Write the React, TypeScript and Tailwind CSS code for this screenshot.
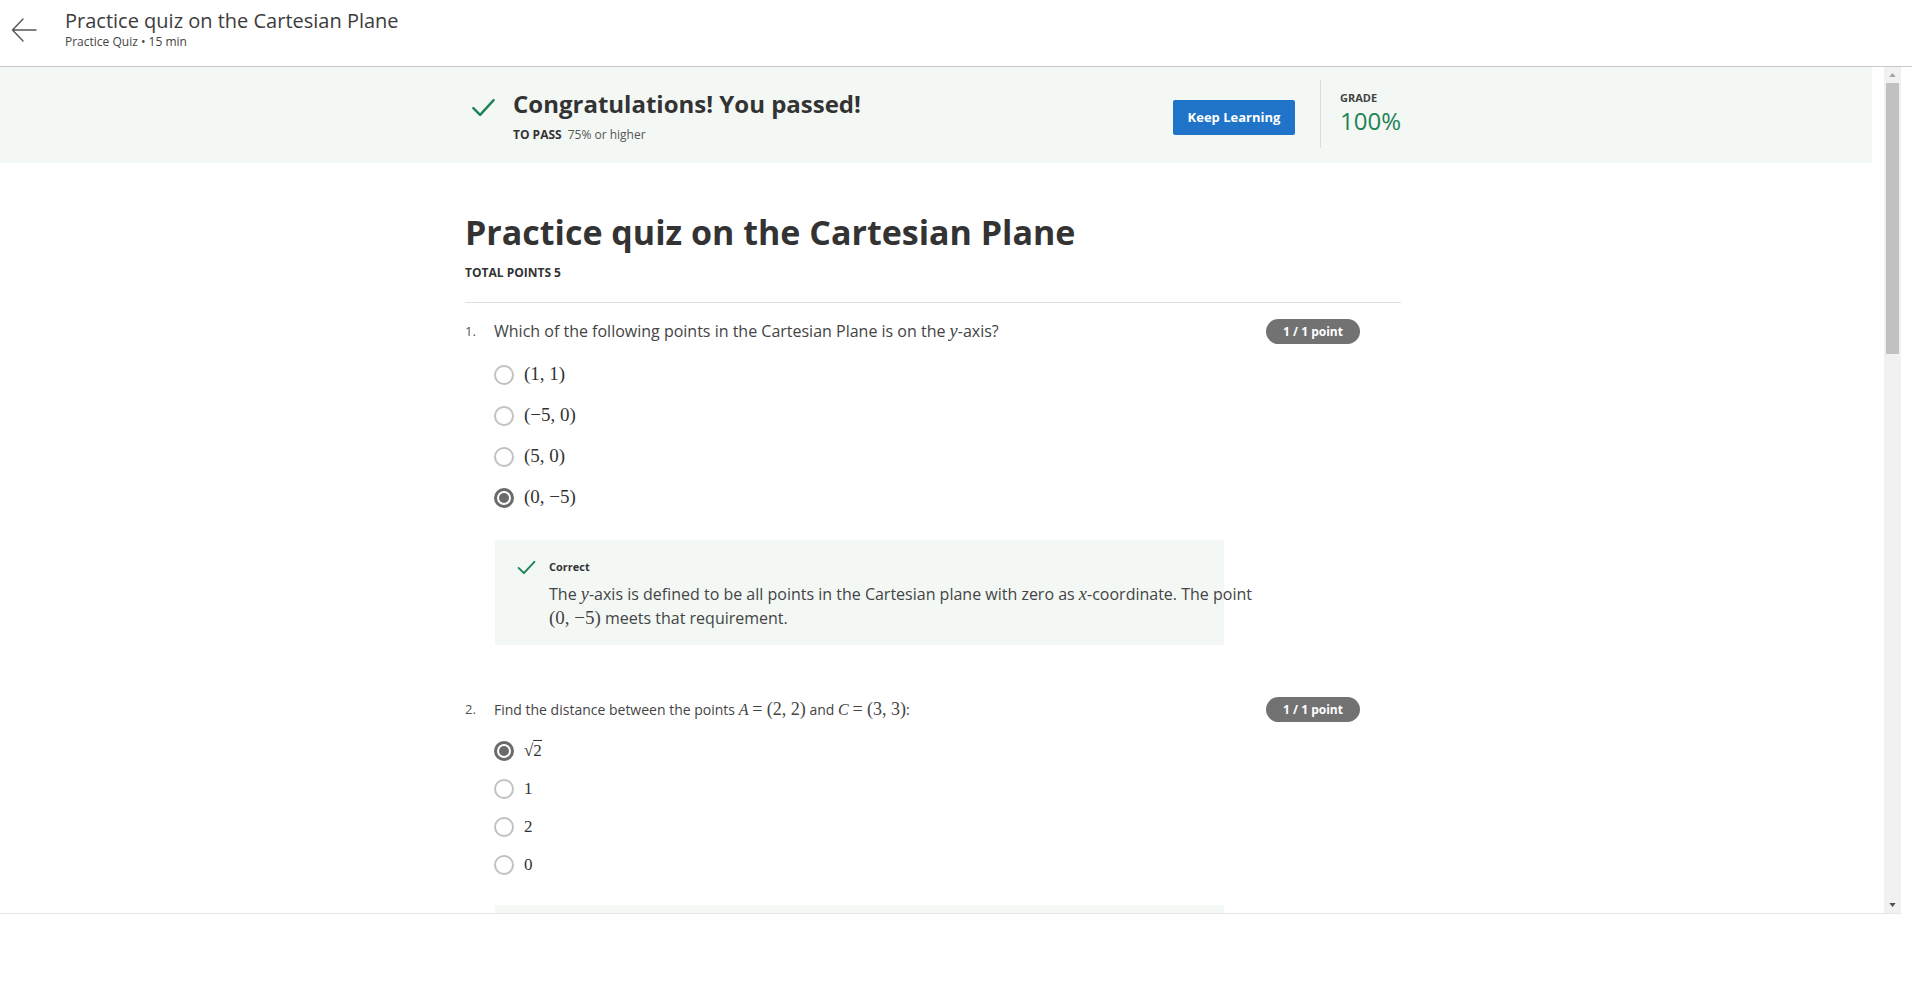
import React from "react";

function Radio({ checked }: { checked?: boolean }) {
  if (checked) {
    return (
      <span className="flex h-[20px] w-[20px] shrink-0 items-center justify-center rounded-full border-[3px] border-[#6a6a6a]">
        <span className="h-[10px] w-[10px] rounded-full bg-[#6a6a6a]" />
      </span>
    );
  }
  return <span className="h-[20px] w-[20px] shrink-0 rounded-full border-2 border-[#c2c2c2]" />;
}

function M({ children, className = "" }: { children: React.ReactNode; className?: string }) {
  return <span className={"font-['Liberation_Serif',serif] " + className}>{children}</span>;
}

function I({ children }: { children: React.ReactNode }) {
  return <span className="font-['Liberation_Serif',serif] text-[1.15em] italic">{children}</span>;
}

function Check({ className = "" }: { className?: string }) {
  return (
    <svg viewBox="0 0 24 24" className={className} fill="none" stroke="#1f8354" strokeWidth="2.2" strokeLinecap="round" strokeLinejoin="round">
      <path d="M3 12.5 L9 18.5 L21 5.5" />
    </svg>
  );
}

function Badge() {
  return (
    <div className="mr-[41px] flex h-[25px] w-[94px] items-center justify-center rounded-full bg-[#727272] text-[12px] font-bold text-white">
      1 / 1 point
    </div>
  );
}

export default function App() {
  return (
    <div className="flex h-[984px] w-[1912px] flex-col overflow-hidden bg-white font-['Open_Sans',sans-serif] text-[#333]">
      {/* Header */}
      <div className="flex h-[67px] shrink-0 items-start border-b border-[#c8c8c8]">
        <div className="ml-[11px] mt-[17px] h-[26px] w-[26px]">
          <svg viewBox="0 0 26 26" className="h-[26px] w-[26px]" fill="none" stroke="#555" strokeWidth="1.4" strokeLinecap="round" strokeLinejoin="round">
            <path d="M25 13 H2 M12 2 L1.5 13 L12 24" />
          </svg>
        </div>
        <div className="ml-[28px] mt-[7px] flex flex-col">
          <div className="text-[20px] leading-[28px] text-[#3c3c3c]">Practice quiz on the Cartesian Plane</div>
          <div className="mt-[-1px] text-[12px] leading-[16px] text-[#444]">Practice Quiz • 15 min</div>
        </div>
      </div>

      {/* Body */}
      <div className="flex h-[847px] w-[1901px] shrink-0 border-b border-[#e6e6e6]">
        <div className="flex-1 overflow-hidden">
          {/* Banner */}
          <div className="mr-[12px] flex h-[96px] bg-[#f3f8f5]">
            <div className="ml-[465px] flex w-[936px] items-start">
              <div className="flex flex-1 items-start pt-[23px]">
                <Check className="ml-[5px] mt-[4px] h-[27px] w-[27px]" />
                <div className="ml-[16px] flex flex-col">
                  <div className="text-[24px] font-bold leading-[28px] text-[#333]">Congratulations! You passed!</div>
                  <div className="mt-[10px] flex items-center text-[12px] leading-[14px]">
                    <span className="font-bold text-[#333]">TO PASS</span>
                    <span className="ml-[6px] text-[#555]">75% or higher</span>
                  </div>
                </div>
              </div>
              <div className="mt-[33px] flex h-[35px] w-[122px] items-center justify-center rounded-[2px] bg-[#1f73c9] text-[13px] font-bold text-white">
                Keep Learning
              </div>
              <div className="ml-[25px] mt-[13px] h-[68px] w-px bg-[#dcdcdc]" />
              <div className="ml-[19px] mt-[24px] flex w-[61px] flex-col">
                <div className="text-[11px] font-bold leading-[14px] text-[#444]">GRADE</div>
                <div className="mt-[1px] text-[24px] leading-[30px] text-[#1f8354]">100%</div>
              </div>
            </div>
          </div>

          {/* Content */}
          <div className="ml-[465px] flex w-[936px] flex-col">
            <h1 className="mt-[47px] text-[34px] font-bold leading-[44px] text-[#333]">Practice quiz on the Cartesian Plane</h1>
            <div className="mt-[11px] text-[12px] font-bold leading-[16px] text-[#333]">TOTAL POINTS 5</div>
            <div className="mt-[21px] h-px bg-[#dedede]" />

            {/* Q1 */}
            <div className="mt-[16px] flex items-start justify-between">
              <div className="flex text-[16px] leading-[24px] text-[#444]">
                <span className="w-[29px] text-[13px] text-[#555]">1.</span>
                <span>
                  Which of the following points in the Cartesian Plane is on the <I>y</I>-axis?
                </span>
              </div>
              <div className="mt-[0px]">
                <Badge />
              </div>
            </div>
            <div className="mt-[10px] flex flex-col pl-[29px]">
              {[
                ["(1, 1)", false],
                ["(−5, 0)", false],
                ["(5, 0)", false],
                ["(0, −5)", true],
              ].map(([t, c], i) => (
                <div key={i} className="flex h-[41px] items-center">
                  <Radio checked={c as boolean} />
                  <M className="ml-[10px] text-[19px] text-[#333]">{t as string}</M>
                </div>
              ))}
            </div>
            <div className="ml-[30px] mt-[22px] flex h-[105px] w-[729px] flex-col bg-[#f3f8f5] pl-[54px] pt-[19px]">
              <div className="relative flex items-center">
                <Check className="absolute left-[-33px] top-[-2px] h-[21px] w-[21px]" />
                <span className="text-[11px] font-bold leading-[16px] text-[#333]">Correct</span>
              </div>
              <div className="mt-[7px] w-[760px] text-[16px] leading-[24px] text-[#444]">
                The <I>y</I>-axis is defined to be all points in the Cartesian plane with zero as <I>x</I>-coordinate. The point
                <br />
                <M className="text-[19px]">(0, −5)</M> meets that requirement.
              </div>
            </div>

            {/* Q2 */}
            <div className="mt-[52px] flex items-start justify-between">
              <div className="flex text-[14px] leading-[24px] text-[#444]">
                <span className="w-[29px] text-[13px] text-[#555]">2.</span>
                <span>
                  Find the distance between the points <I>A</I> <M className="text-[18px]">= (2, 2)</M> and <I>C</I>{" "}
                  <M className="text-[18px]">= (3, 3)</M>:
                </span>
              </div>
              <div className="mt-[0px]">
                <Badge />
              </div>
            </div>
            <div className="mt-[10px] flex flex-col pl-[29px]">
              {[
                ["√2", true],
                ["1", false],
                ["2", false],
                ["0", false],
              ].map(([t, c], i) => (
                <div key={i} className="flex h-[38px] items-center">
                  <Radio checked={c as boolean} />
                  <M className="ml-[10px] text-[17px] text-[#333]">
                    {t === "√2" ? (
                      <span>
                        √<span className="border-t border-[#333]">2</span>
                      </span>
                    ) : (
                      (t as string)
                    )}
                  </M>
                </div>
              ))}
            </div>
            <div className="ml-[30px] mt-[21px] h-[105px] w-[729px] bg-[#f3f8f5]" />
          </div>
        </div>

        {/* Scrollbar */}
        <div className="flex w-[17px] flex-col items-center bg-[#f1f1f1]">
          <div className="flex h-[16px] w-full items-center justify-center">
            <svg viewBox="0 0 8 5" className="h-[4px] w-[7px]">
              <path d="M0 5 L4 0 L8 5 Z" fill="#a3a3a3" />
            </svg>
          </div>
          <div className="h-[271px] w-[13px] bg-[#c1c1c1]" />
          <div className="flex-1" />
          <div className="flex h-[16px] w-full items-center justify-center">
            <svg viewBox="0 0 8 5" className="h-[4px] w-[7px]">
              <path d="M0 0 L4 5 L8 0 Z" fill="#505050" />
            </svg>
          </div>
        </div>
      </div>
      <div className="flex-1 bg-white" />
    </div>
  );
}
